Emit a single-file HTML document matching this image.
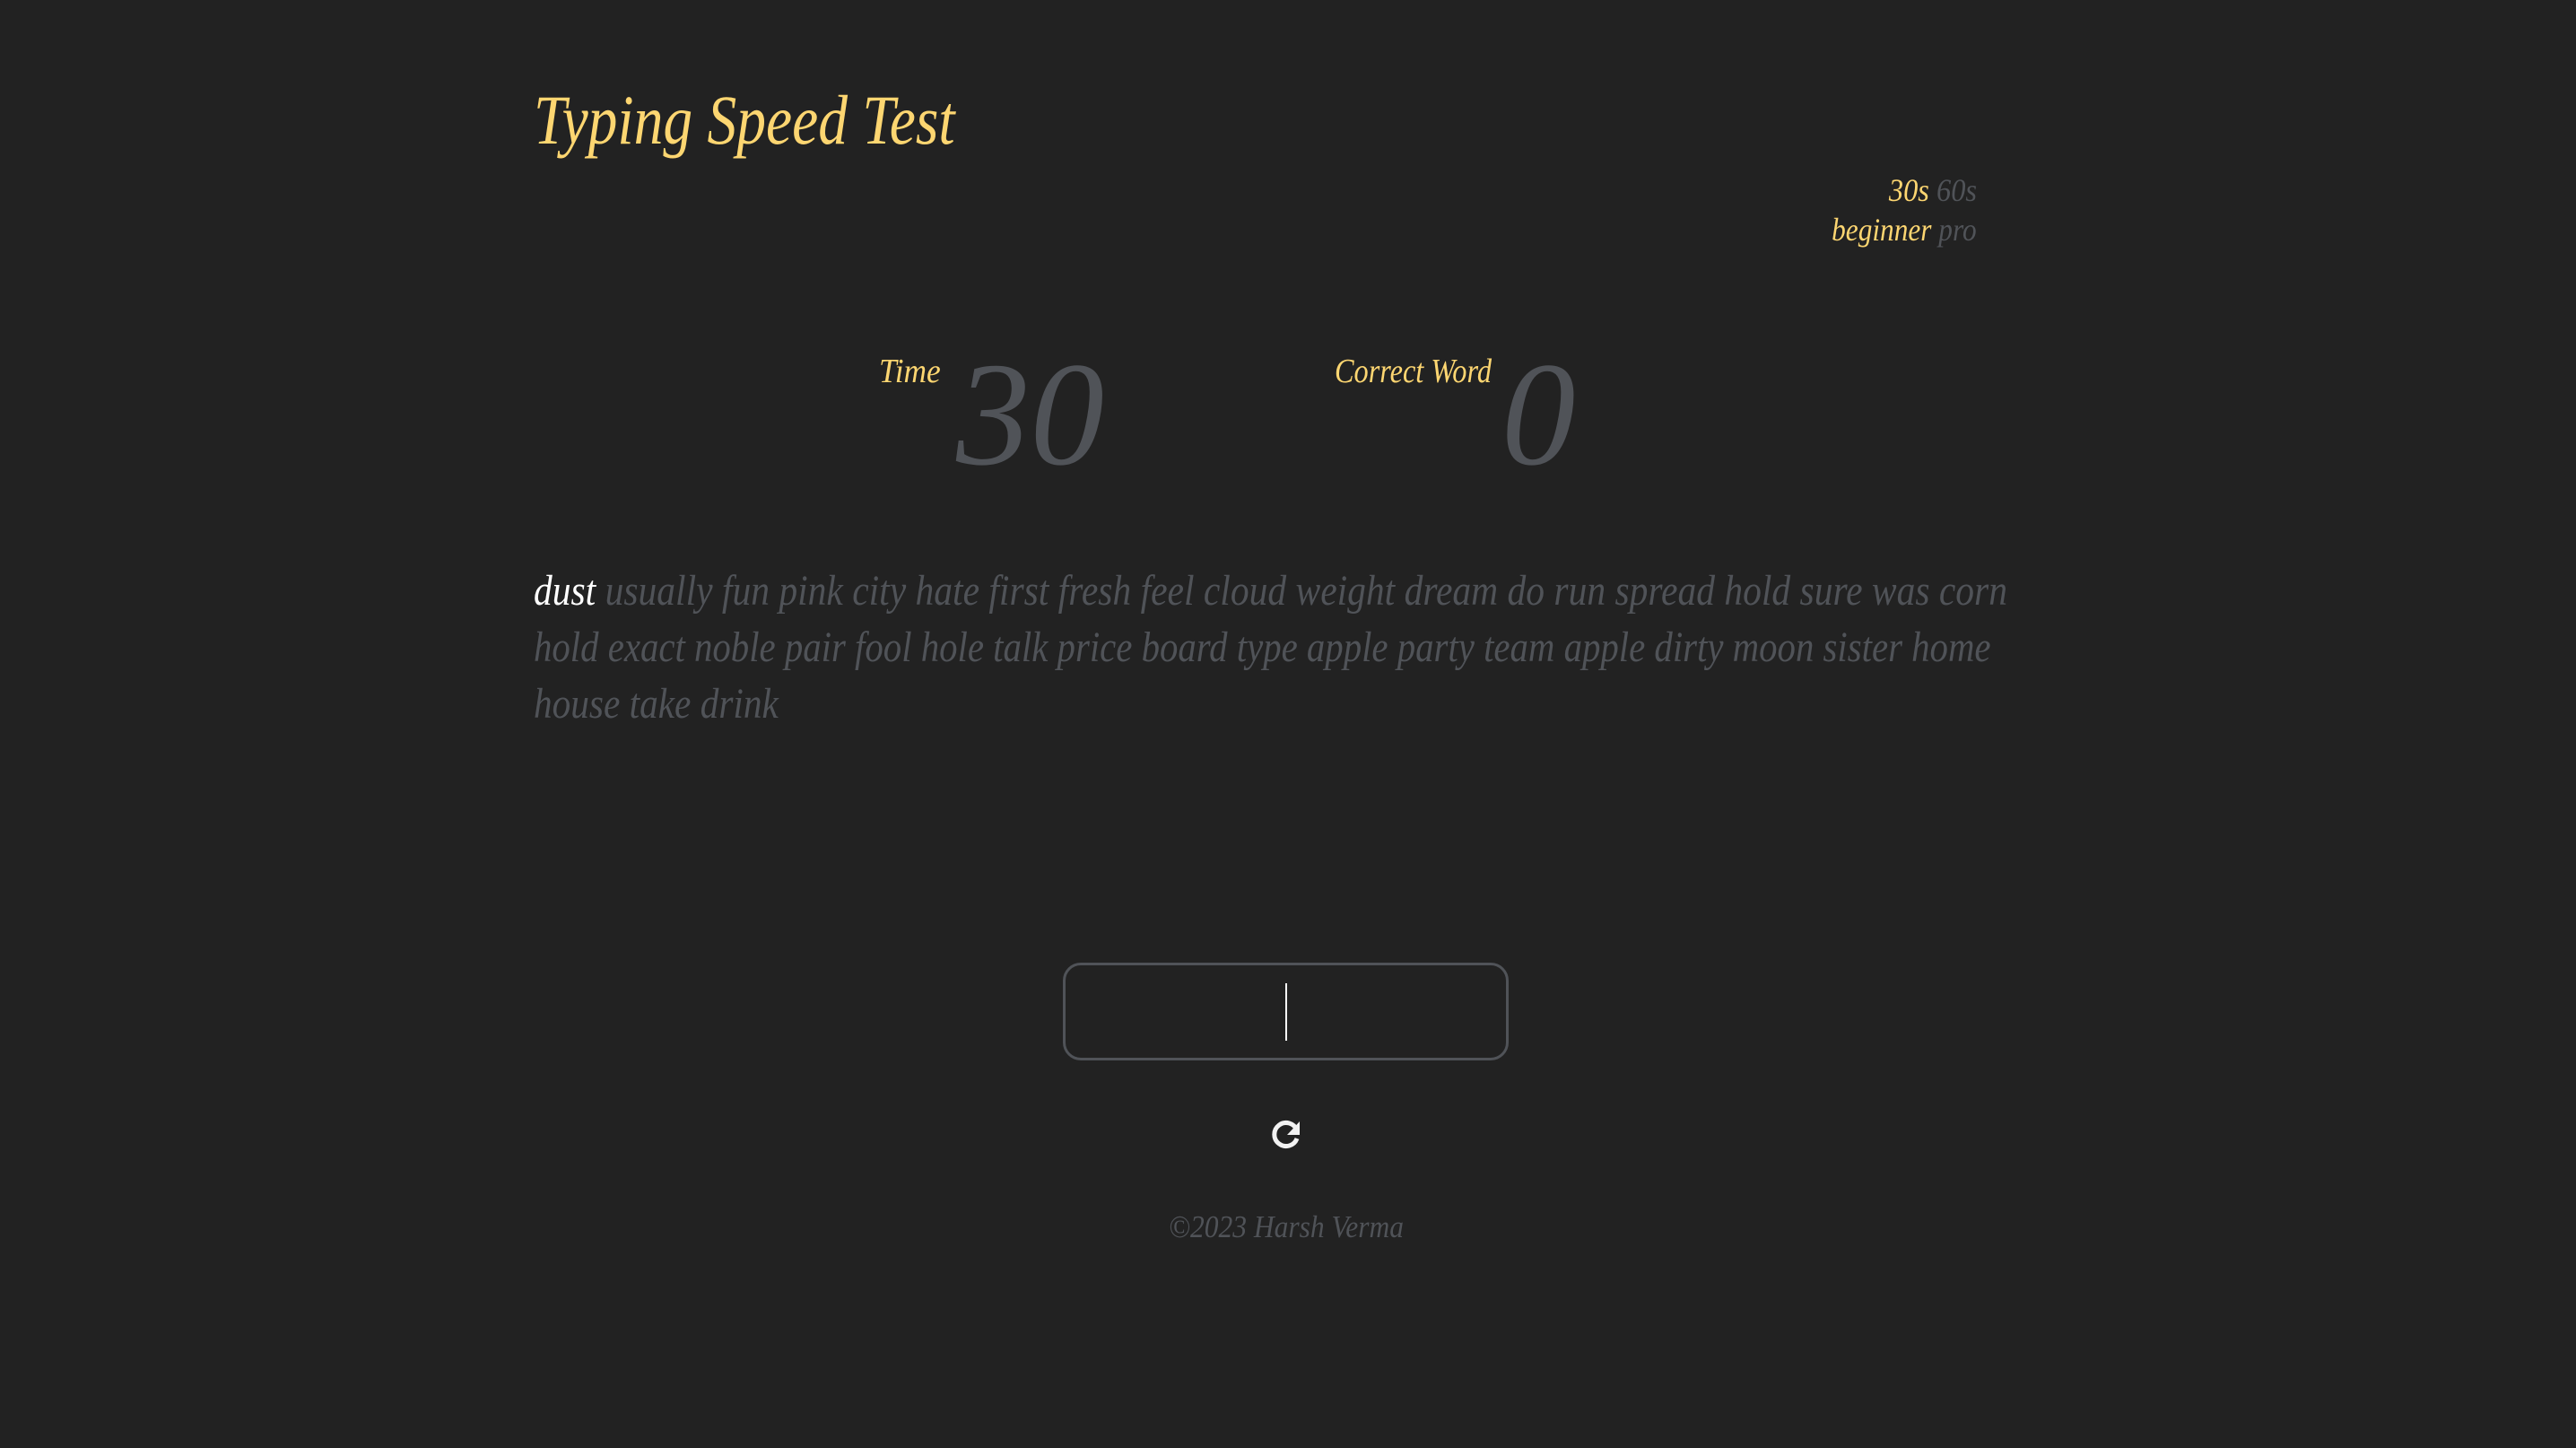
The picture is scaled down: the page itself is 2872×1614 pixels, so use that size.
<!DOCTYPE html>
<html><head><meta charset="utf-8"><style>
html,body{margin:0;padding:0;background:#222222;width:2872px;height:1614px;overflow:hidden}
body{position:relative;font-family:"Liberation Serif",serif;font-style:italic}
.a{position:absolute;white-space:nowrap;line-height:1}
.y{color:#fdd671}.g{color:#505358}
</style></head><body>
<div class="a y" style="left:595px;top:95px;font-size:78px;transform:scaleX(0.84);transform-origin:left">Typing Speed Test</div>
<div class="a" style="right:668px;top:194px;font-size:36px;transform:scaleX(0.9);transform-origin:right"><span class="y">30s</span> <span class="g">60s</span></div>
<div class="a" style="right:668px;top:238px;font-size:36px;transform:scaleX(0.87);transform-origin:right"><span class="y">beginner</span> <span class="g">pro</span></div>
<div class="a y" style="left:980px;top:395px;font-size:38px;transform:scaleX(0.93);transform-origin:left">Time</div>
<div class="a g" style="left:1066px;top:379px;font-size:165px;">30</div>
<div class="a y" style="left:1488px;top:395px;font-size:38px;transform:scaleX(0.85);transform-origin:left">Correct Word</div>
<div class="a g" style="left:1674px;top:379px;font-size:165px;">0</div>
<div class="a g" style="left:595px;top:635px;font-size:48px;transform:scaleX(0.865);transform-origin:left"><span style="color:#fff">dust</span> usually fun pink city hate first fresh feel cloud weight dream do run spread hold sure was corn</div>
<div class="a g" style="left:595px;top:698px;font-size:48px;transform:scaleX(0.85);transform-origin:left">hold exact noble pair fool hole talk price board type apple party team apple dirty moon sister home</div>
<div class="a g" style="left:595px;top:761px;font-size:48px;transform:scaleX(0.86);transform-origin:left">house take drink</div>
<div style="position:absolute;left:1185px;top:1073px;width:491px;height:103px;border:3px solid #505358;border-radius:20px;"></div>
<div style="position:absolute;left:1433px;top:1096px;width:2px;height:64px;background:#fff"></div>
<svg style="position:absolute;left:1410px;top:1240px" width="48" height="48" viewBox="0 0 48 48">
<path d="M36 20 A13 13 0 1 0 36 29" fill="none" stroke="#f2f2f2" stroke-width="5"/>
<path d="M39 10 L39 25 L25 25 Z" fill="#f2f2f2"/>
</svg>
<div class="a g" style="left:0;width:2868px;text-align:center;top:1350px;font-size:35px;transform:scaleX(0.9);transform-origin:1434px 0">©2023 Harsh Verma</div>
</body></html>
